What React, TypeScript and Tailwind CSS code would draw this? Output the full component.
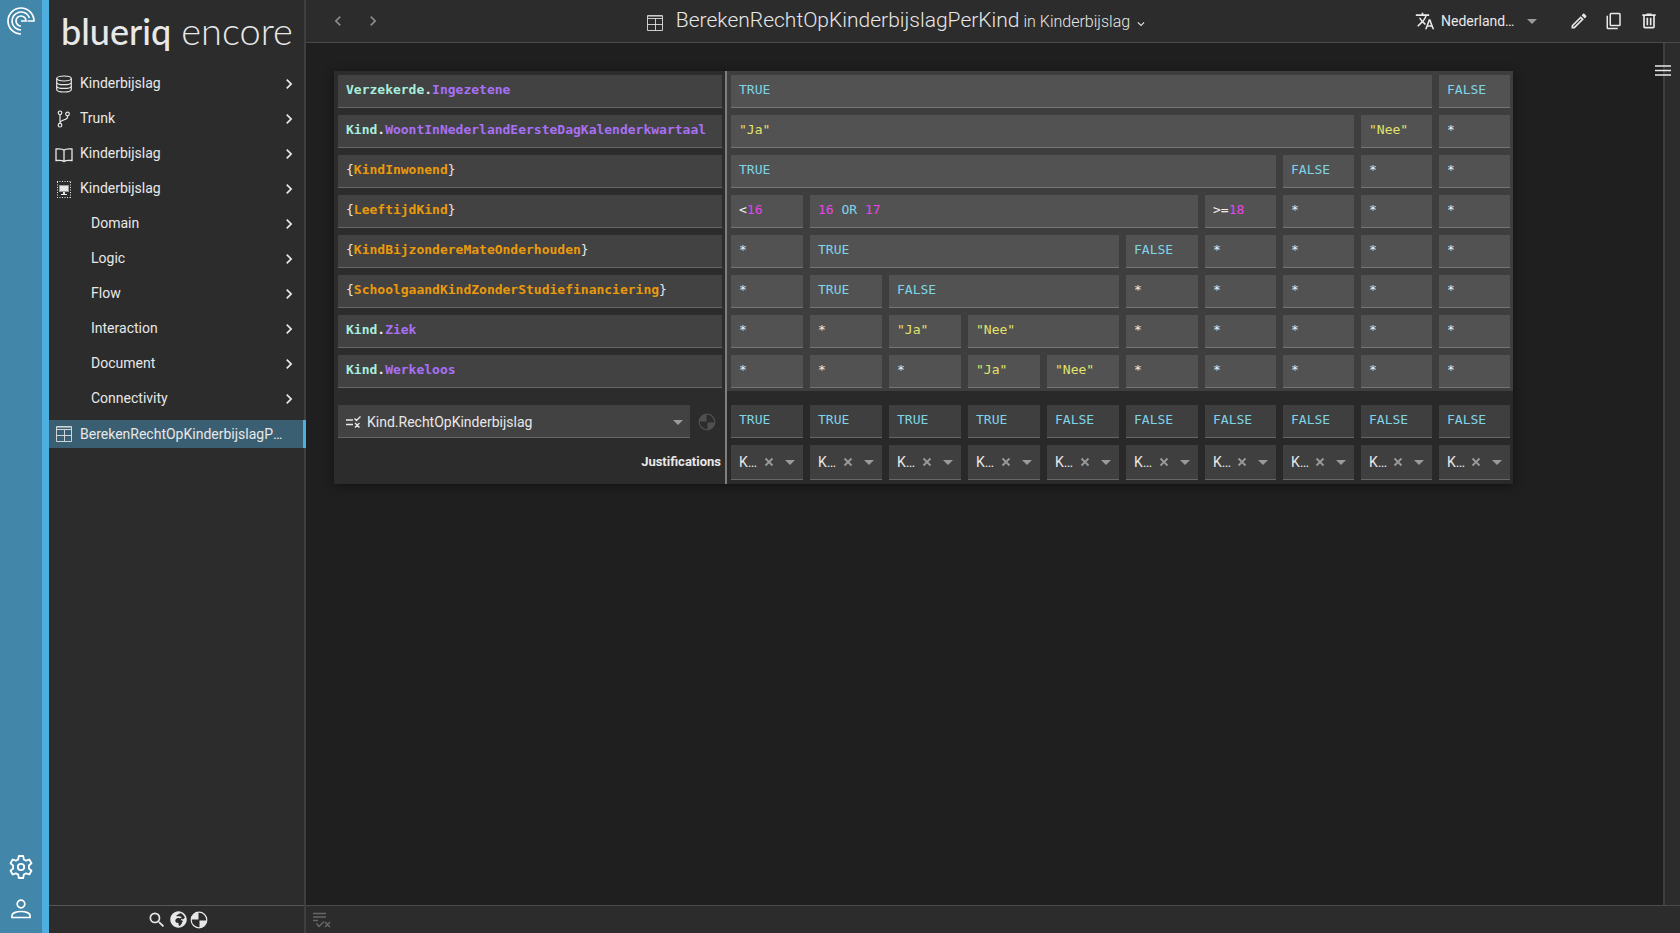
import type { ReactNode } from 'react';
import { FaGlobeAfrica } from 'react-icons/fa';
import { MdSearch, MdTranslate } from 'react-icons/md';

type Kind = 'bool' | 'text' | 'num' | 'op';
type Token = [Kind, string];
type Cell = { span?: number; tokens: Token[] };

const tokenColor: Record<Kind, string> = {
  bool: 'text-[#80d4e8]',
  text: 'text-[#e2e26c]',
  num: 'text-[#e844e8]',
  op: 'text-[#f0f0f0]',
};

const T = (span = 1): Cell => ({ span, tokens: [['bool', 'TRUE']] });
const F = (span = 1): Cell => ({ span, tokens: [['bool', 'FALSE']] });
const S = (value: string, span = 1): Cell => ({ span, tokens: [['text', `"${value}"`]] });
const any = (count: number): Cell[] => Array.from({ length: count }, () => ({ tokens: [['op', '*']] }));

type Row = { entity?: string; name: string; cells: Cell[] };

const rows: Row[] = [
  { entity: 'Verzekerde', name: 'Ingezetene', cells: [T(9), F()] },
  { entity: 'Kind', name: 'WoontInNederlandEersteDagKalenderkwartaal', cells: [S('Ja', 8), S('Nee'), ...any(1)] },
  { name: 'KindInwonend', cells: [T(7), F(), ...any(2)] },
  {
    name: 'LeeftijdKind',
    cells: [
      { tokens: [['op', '<'], ['num', '16']] },
      { span: 5, tokens: [['num', '16'], ['bool', ' OR '], ['num', '17']] },
      { tokens: [['op', '>='], ['num', '18']] },
      ...any(3),
    ],
  },
  { name: 'KindBijzondereMateOnderhouden', cells: [...any(1), T(4), F(), ...any(4)] },
  { name: 'SchoolgaandKindZonderStudiefinanciering', cells: [...any(1), T(), F(3), ...any(5)] },
  { entity: 'Kind', name: 'Ziek', cells: [...any(2), S('Ja'), S('Nee', 2), ...any(5)] },
  { entity: 'Kind', name: 'Werkeloos', cells: [...any(3), S('Ja'), S('Nee'), ...any(5)] },
];

const results: Cell[] = [T(), T(), T(), T(), F(), F(), F(), F(), F(), F()];

const sections = ['Domain', 'Logic', 'Flow', 'Interaction', 'Document', 'Connectivity'];

function Icon({ d, className = 'size-5' }: { d: string; className?: string }) {
  return (
    <svg viewBox="0 0 24 24" fill="currentColor" className={className} aria-hidden="true">
      <path d={d} />
    </svg>
  );
}

const PENCIL =
  'M14.06,9L15,9.94L5.92,19H5V18.08L14.06,9M17.66,3C17.41,3 17.15,3.1 16.96,3.29L15.13,5.12L18.88,8.87L20.71,7.04C21.1,6.65 21.1,6 20.71,5.63L18.37,3.29C18.17,3.09 17.92,3 17.66,3M14.06,6.19L3,17.25V21H6.75L17.81,9.94L14.06,6.19Z';
const TRASH =
  'M9,3V4H4V6H5V19A2,2 0 0,0 7,21H17A2,2 0 0,0 19,19V6H20V4H15V3H9M7,6H17V19H7V6M9,8V17H11V8H9M13,8V17H15V8H13Z';
const COPY =
  'M19,17H8V3H19M19,1H8A2,2 0 0,0 6,3V17A2,2 0 0,0 8,19H19A2,2 0 0,0 21,17V3A2,2 0 0,0 19,1M4,5H2V21A2,2 0 0,0 4,23H17V21H4V5Z';
const CHEVRON_RIGHT = 'M8.59,16.58L13.17,12L8.59,7.41L10,6L16,12L10,18L8.59,16.58Z';
const CHEVRON_LEFT = 'M15.41,16.58L10.83,12L15.41,7.41L14,6L8,12L14,18L15.41,16.58Z';
const CHEVRON_DOWN = 'M7.41,8.58L12,13.17L16.59,8.58L18,10L12,16L6,10L7.41,8.58Z';

function Brand() {
  return (
    <svg viewBox="0 0 28 28" fill="none" stroke="currentColor" strokeWidth="1.7" className="size-7">
      <path d="M14 27A13 13 0 1 1 27 14H20.5" />
      <path d="M14 23A9 9 0 1 1 22.500 11" />
      <path d="M14 19A5 5 0 1 1 19 14H14" />
    </svg>
  );
}

function Gear() {
  return (
    <svg viewBox="0 0 24 24" fill="none" stroke="currentColor" strokeWidth="1.8" strokeLinejoin="round" className="size-6">
      <path d="M9.800 1h4.400l.6 3.400 2.300 1.300 3.200-1.200 2.200 3.800-2.600 2.200v3l2.600 2.200-2.200 3.800-3.200-1.200-2.300 1.300-.6 3.400H9.800l-.6-3.400-2.300-1.300-3.200 1.200-2.200-3.800 2.600-2.200v-3L1.500 8.300l2.200-3.800 3.200 1.200 2.300-1.300z" />
      <circle cx="12" cy="12" r="3.200" />
    </svg>
  );
}

function Person() {
  return (
    <svg viewBox="0 0 20 20" fill="none" stroke="currentColor" strokeWidth="1.7" className="size-5">
      <circle cx="10" cy="5" r="3.800" />
      <path d="M1 18.500v-2.300c0-2 3.800-3.700 9-3.700s9 1.700 9 3.700v2.300z" />
    </svg>
  );
}

function Database() {
  return (
    <svg viewBox="0 0 18 18" fill="none" stroke="currentColor" strokeWidth="1.200" className="mt-0.5 size-[18px]">
      <ellipse cx="9" cy="3.500" rx="7.300" ry="2.500" />
      <path d="M1.700 3.500v11c0 1.400 3.300 2.500 7.300 2.500s7.300-1.100 7.300-2.500v-11M1.700 7.200c0 1.400 3.300 2.500 7.300 2.500s7.300-1.100 7.300-2.500M1.700 10.900c0 1.400 3.300 2.500 7.300 2.500s7.300-1.100 7.300-2.500" />
    </svg>
  );
}

function Branch() {
  return (
    <svg viewBox="0 0 18 18" fill="none" stroke="currentColor" strokeWidth="1.200" className="mt-0.5 size-[18px]">
      <circle cx="5" cy="2.800" r="1.800" />
      <circle cx="5" cy="15.200" r="1.800" />
      <circle cx="12.500" cy="4" r="1.800" />
      <path d="M5 4.600v8.800M12.500 5.800v1.700c0 2.500-7.500 2-7.500 5.500" />
    </svg>
  );
}

function Book() {
  return (
    <svg viewBox="0 0 18 18" fill="none" stroke="currentColor" strokeWidth="1.300" className="mt-0.5 size-[18px]">
      <path d="M9 5.500C8 4 5 3.600 1 4v11.500c4-.3 7 0 8 1 1-1 4-1.300 8-1V4c-4-.4-7 0-8 1.500zM9 5.500v11" />
    </svg>
  );
}

function Module() {
  return (
    <svg viewBox="0 0 18 18" className="mt-0.5 size-[18px]">
      <path d="M2 1.500h14M2 17.500h14M2.500 2v16M15.500 2v16" fill="none" stroke="currentColor" strokeDasharray="1 1.500" />
      <rect x="4.500" y="5.500" width="9" height="6" fill="currentColor" stroke="#9a9a9a" />
      <path d="M8 12h2v2H8zM6 14h6v1H6z" fill="currentColor" />
    </svg>
  );
}

function TableIcon() {
  return (
    <svg viewBox="0 0 18 18" fill="none" stroke="currentColor" className="size-[18px]">
      <path d="M1.500 1.500h15v15h-15zM1.500 4.500h15M1.500 10.500h15M9.500 4.500v12" opacity=".85" />
      <path d="M1.500 2.500h15" opacity=".5" />
    </svg>
  );
}

function Quarters() {
  return (
    <svg viewBox="0 0 18 18" className="size-[18px]">
      <circle cx="9" cy="9" r="7.800" fill="none" stroke="currentColor" strokeWidth="1.200" />
      <path d="M8.500 8.500V1.200A7.800 7.800 0 0 0 1.200 8.500zM9.500 9.500v7.300a7.800 7.800 0 0 0 7.300-7.300z" fill="currentColor" />
    </svg>
  );
}

function Caret() {
  return <span className="pointer-events-none size-0 shrink-0 border-x-5 border-t-5 border-x-transparent border-t-[#9a9a9a]" />;
}

function NavItem({ icon, label }: { icon?: ReactNode; label: string }) {
  return (
    <li>
      <a href="#" className="flex h-7 items-center pr-[5px] pl-1.5">
        {icon ? <span className="mr-[7px]">{icon}</span> : <span className="w-9" />}
        <span className="flex-1 truncate">{label}</span>
        <Icon d={CHEVRON_RIGHT} className="mt-0.5 size-5" />
      </a>
    </li>
  );
}

function Expression({ cell, className }: { cell: Cell; className: string }) {
  return (
    <div className={`h-[33px] border-b px-2 pt-[5px] font-['Consolas','DejaVu_Sans_Mono',monospace] text-[13px] leading-5 whitespace-pre ${className}`}>
      {cell.tokens.map(([kind, text], i) => (
        <span key={i} className={tokenColor[kind]}>{text}</span>
      ))}
    </div>
  );
}

function Sidebar() {
  return (
    <aside className="flex w-[257px] shrink-0 flex-col border-r-2 border-[#3f3f3f] bg-[#2c2c2c]">
      <h1 className="flex h-[69px] items-baseline gap-2.5 pt-1.5 pl-3 font-['Lato',sans-serif] text-4xl leading-[48px] whitespace-nowrap">
        <span className="font-medium">blueriq</span>
        <span className="text-[38px] leading-[48px] font-light">encore</span>
      </h1>
      <nav className="flex-1 text-sm">
        <ul className="flex flex-col gap-[7px]">
          <NavItem icon={<Database />} label="Kinderbijslag" />
          <NavItem icon={<Branch />} label="Trunk" />
          <NavItem icon={<Book />} label="Kinderbijslag" />
          <NavItem icon={<Module />} label="Kinderbijslag" />
          {sections.map((s) => (
            <NavItem key={s} label={s} />
          ))}
        </ul>
        <a href="#" aria-current="page"
          className="-mr-0.5 mt-2 flex h-7 items-center gap-[7px] border-r-3 border-[#4eaee0] bg-[#3b5f72] pr-[18px] pl-1.5">
          <TableIcon />
          <span className="flex-1 truncate">BerekenRechtOpKinderbijslagPerKind</span>
        </a>
      </nav>
      <div className="flex h-7 items-center justify-center gap-0.5 border-t border-[#575757] pl-0.5">
        <button aria-label="Search"><MdSearch className="size-5" /></button>
        <button aria-label="Languages"><FaGlobeAfrica className="mx-px size-[17px]" /></button>
        <button aria-label="Coverage"><Quarters /></button>
      </div>
    </aside>
  );
}

function Header() {
  return (
    <header className="flex h-[43px] shrink-0 items-center border-b border-[#4a4a4a] bg-[#2c2c2c]">
      <div className="flex w-[84px] shrink-0 items-center gap-[15px] pl-[22px] text-[#8a8a8a]">
        <button aria-label="Back"><Icon d={CHEVRON_LEFT} /></button>
        <button aria-label="Forward"><Icon d={CHEVRON_RIGHT} /></button>
      </div>
      <div className="flex flex-1 items-center justify-center whitespace-nowrap">
        <span className="mt-1 mr-3"><TableIcon /></span>
        <h2 className="flex items-baseline gap-1 text-[21px] font-light">
          BerekenRechtOpKinderbijslagPerKind
          <small className="text-base">in Kinderbijslag</small>
        </h2>
        <button aria-label="Show locations" className="mt-1.5 ml-1"><Icon d={CHEVRON_DOWN} className="size-3.5" /></button>
      </div>
      <div className="flex w-[276px] shrink-0 items-center justify-end pr-[21px]">
        <label className="flex items-center gap-1.5">
          <MdTranslate className="size-5" />
          <select aria-label="Language" className="w-20 appearance-none text-sm">
            <option>Nederland…</option>
          </select>
          <Caret />
        </label>
        <div className="ml-8 flex items-center gap-[15px]">
          <button aria-label="Edit"><Icon d={PENCIL} /></button>
          <button aria-label="Copy"><Icon d={COPY} className="mx-px size-[18px]" /></button>
          <button aria-label="Delete"><Icon d={TRASH} /></button>
        </div>
      </div>
    </header>
  );
}

function DecisionTable() {
  return (
    <table className="w-[1179px] table-fixed border-separate border-spacing-0 bg-[#2c2c2c] text-left shadow-[0_2px_10px_rgba(0,0,0,0.4)]">
      <colgroup>
        <col className="w-[393px]" />
        <col span={6} className="w-[79px]" />
        <col span={4} className="w-[78px]" />
      </colgroup>
      <tbody>
        {rows.map((row) => (
          <tr key={row.name}>
            <th className="border-r-2 border-[#7f7f7f] pt-1 pr-[3px] pb-[3px] pl-1">
              <div className="h-[33px] truncate border-b border-[#666] bg-[#424242] px-2 pt-[5px] font-['Consolas','DejaVu_Sans_Mono',monospace] text-[13px] leading-5">
                {row.entity ? (
                  <>
                    <span className="text-[#a8eedd]">{row.entity}</span>.
                    <span className="text-[#a970f5]">{row.name}</span>
                  </>
                ) : (
                  <>
                    <span className="font-normal">{'{'}</span>
                    <span className="text-[#ea9a0c]">{row.name}</span>
                    <span className="font-normal">{'}'}</span>
                  </>
                )}
              </div>
            </th>
            {row.cells.map((cell, i) => (
              <td key={i} colSpan={cell.span} className="bg-[#3e3e3e] pt-1 pr-[3px] pb-[3px] pl-1">
                <Expression cell={cell} className="border-[#757575] bg-[#525252]" />
              </td>
            ))}
          </tr>
        ))}
      </tbody>
      <tfoot>
        <tr>
          <th className="border-r-2 border-[#7f7f7f] pt-3.5 pr-[3px] pb-[3px] pl-1 font-normal">
            <div className="flex items-center">
              <label className="flex h-[33px] flex-1 items-center border-b border-[#666] bg-[#424242] pt-0.5 pr-[7px] pl-2">
                <svg viewBox="0 0 15 12" fill="none" stroke="currentColor" strokeWidth="1.400" className="mr-1.5 h-3 w-[15px]">
                  <path d="M0 4h7M0 8.500h7M8.500 2.500l2 2L14.500 .5M9 7l4.500 4.500M13.500 7L9 11.500" />
                </svg>
                <select aria-label="Result attribute" className="flex-1 appearance-none text-sm">
                  <option>Kind.RechtOpKinderbijslag</option>
                </select>
                <Caret />
              </label>
              <button aria-label="Coverage" className="mr-1.5 ml-2 text-[#505050]"><Quarters /></button>
            </div>
          </th>
          {results.map((cell, i) => (
            <td key={i} className="bg-[#292929] pt-3.5 pr-[3px] pb-[3px] pl-1">
              <Expression cell={cell} className="border-[#666] bg-[#3f3f3f]" />
            </td>
          ))}
        </tr>
        <tr>
          <th className="border-r-2 border-[#7f7f7f] pr-1 pb-0.5 text-right text-[13px]">Justifications</th>
          {results.map((_, i) => (
            <td key={i} className="bg-[#292929] pt-1 pr-[3px] pb-1 pl-1">
              <div className="flex h-[35px] items-center border-b border-[#666] bg-[#3f3f3f] px-2">
                <select aria-label={`Justification ${i + 1}`} className="min-w-0 flex-1 appearance-none text-sm">
                  <option>K…</option>
                </select>
                <button aria-label="Clear" className="mr-2 text-[#9a9a9a]">
                  <svg viewBox="0 0 16 16" stroke="currentColor" strokeWidth="1.800" className="size-4">
                    <path d="M4.500 4.500l7 7M11.500 4.500l-7 7" />
                  </svg>
                </button>
                <Caret />
              </div>
            </td>
          ))}
        </tr>
      </tfoot>
    </table>
  );
}

export default function App() {
  return (
    <div className="flex h-screen bg-[#1f1f1f] font-['Roboto',sans-serif] text-[#e8e8e8]">
      <div className="flex w-[49px] shrink-0 flex-col items-center border-r-7 border-[#4eaee0] bg-[#4286a9] pt-[7px] pb-3.5 text-white">
        <Brand />
        <button aria-label="Settings" className="mt-auto"><Gear /></button>
        <button aria-label="Account" className="mt-5"><Person /></button>
      </div>
      <Sidebar />
      <div className="flex min-w-0 flex-1 flex-col">
        <Header />
        <div className="flex min-h-0 flex-1">
          <main className="min-w-0 flex-1 overflow-auto pt-7 pl-7">
            <DecisionTable />
          </main>
          <div className="relative w-[17px] shrink-0 border-l-2 border-[#3f3f3f] bg-[#2c2c2c]">
            <button aria-label="Open panel" className="absolute top-[22px] -left-2.5">
              <svg viewBox="0 0 16 11" stroke="currentColor" strokeWidth="1.500" className="h-[11px] w-4">
                <path d="M0 1h16M0 5.500h16M0 10h16" />
              </svg>
            </button>
          </div>
        </div>
        <footer className="flex h-7 shrink-0 items-center border-t border-[#4a4a4a] bg-[#2c2c2c] pl-[7px] text-[#666]">
          <button aria-label="Validation">
            <svg viewBox="0 0 18 16" fill="none" stroke="currentColor" strokeWidth="1.500" className="h-4 w-[18px]">
              <path d="M0 1.500h13M0 5h13M0 8.500h5M3.500 11.500l2.500 3 5-5M12 10l5 5M17 10l-5 5" />
            </svg>
          </button>
        </footer>
      </div>
    </div>
  );
}
